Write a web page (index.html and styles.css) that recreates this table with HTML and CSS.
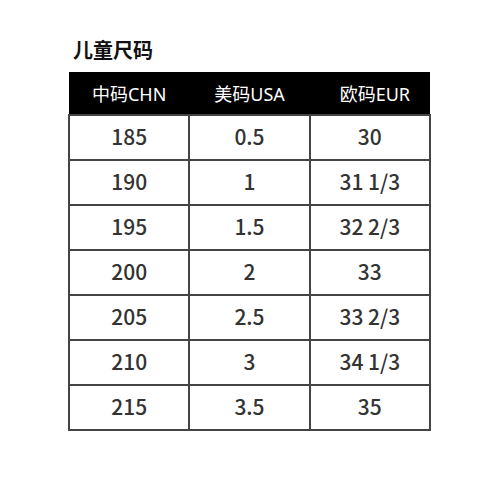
FILE: index.html
```html
<!DOCTYPE html>
<html lang="zh">
<head>
<meta charset="utf-8">
<link rel="stylesheet" href="styles.css">
</head>
<body>
<div class="page">
  <h1 class="title">儿童尺码</h1>
  <table class="size-table">
    <thead>
      <tr><th>中码CHN</th><th>美码USA</th><th class="eur">欧码EUR</th></tr>
    </thead>
    <tbody>
      <tr><td>185</td><td>0.5</td><td>30</td></tr>
      <tr><td>190</td><td>1</td><td>31 1/3</td></tr>
      <tr><td>195</td><td>1.5</td><td>32 2/3</td></tr>
      <tr><td>200</td><td>2</td><td>33</td></tr>
      <tr><td>205</td><td>2.5</td><td>33 2/3</td></tr>
      <tr><td>210</td><td>3</td><td>34 1/3</td></tr>
      <tr><td>215</td><td>3.5</td><td>35</td></tr>
    </tbody>
  </table>
</div>
</body>
</html>
```
FILE: styles.css
```css
html, body {
  margin: 0;
  padding: 0;
  background: #fff;
}
body {
  font-family: "Noto Sans", "Noto Sans CJK SC", sans-serif;
  width: 500px;
  height: 500px;
}
.page {
  padding: 38px 0 0 68px;
}
.title {
  margin: 0 0 10px 5px;
  font-family: "Noto Sans CJK SC", sans-serif;
  font-size: 20px;
  line-height: 24px;
  font-weight: 700;
  color: #111;
}
.size-table {
  border-collapse: collapse;
  width: 363px;
  table-layout: fixed;
}
.size-table th {
  background: #000;
  color: #fff;
  font-weight: 400;
  font-size: 18px;
  height: 42px;
  padding: 0;
  text-align: center;
}
.size-table th.eur {
  padding-left: 10px;
}
.size-table td {
  border: 2px solid #444;
  height: 40px;
  padding: 0 0 3px;
  text-align: center;
  font-family: "Noto Sans CJK SC", sans-serif;
  font-size: 21px;
  font-weight: 500;
  color: #333;
}
```
